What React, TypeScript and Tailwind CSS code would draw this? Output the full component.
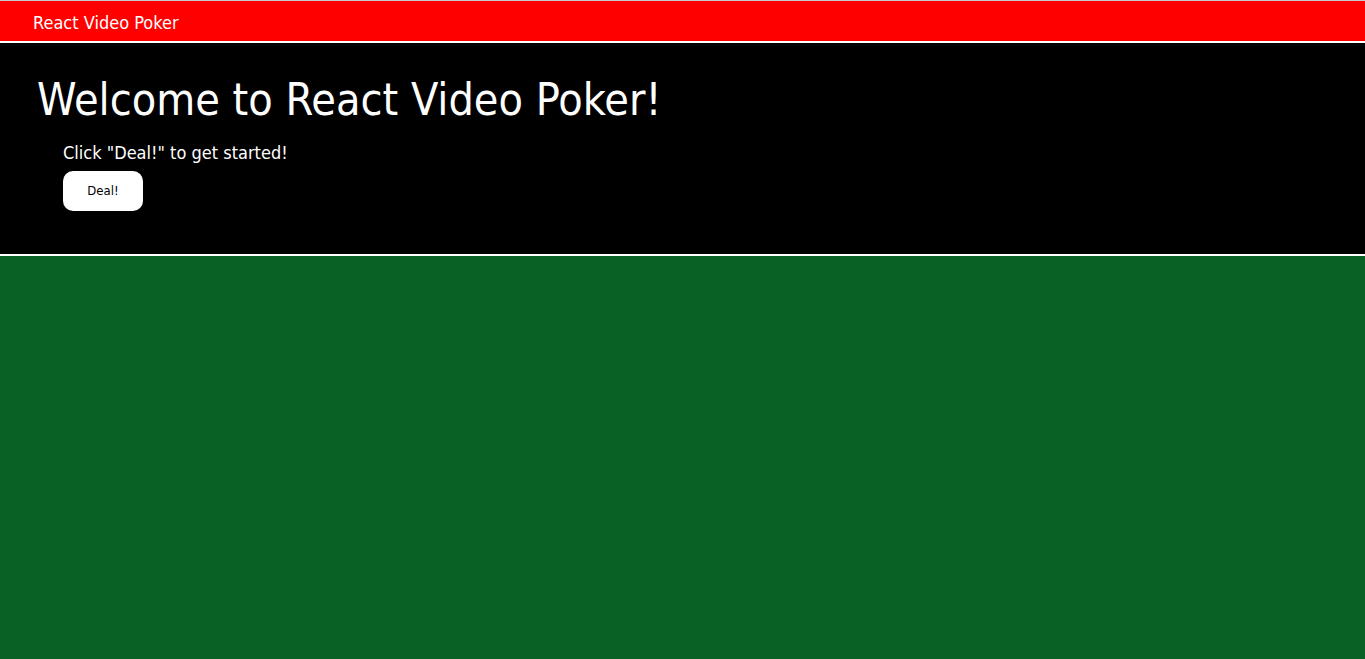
export default function App() {
  return (
    <div
      className="min-h-[659px] bg-[#0a6125] text-white"
      style={{ fontFamily: '"DejaVu Sans Condensed", "DejaVu Sans", sans-serif' }}
    >
      <div className="border-t border-[#c8c8c8]" />
      <header className="h-[40px] bg-[#ff0000] border-b-2 border-white flex items-center px-[33px] box-content">
        <span className="text-[18px] mt-[2px]">React Video Poker</span>
      </header>
      <section className="bg-black border-b-2 border-white h-[213px] pl-[37px] pt-[35px]">
        <h1 className="text-[44.5px] leading-none">Welcome to React Video Poker!</h1>
        <div className="pl-[26px] mt-[19px]">
          <p className="text-[18px] leading-tight">Click "Deal!" to get started!</p>
          <button className="mt-[7px] w-[80px] h-[40px] rounded-[10px] bg-white text-black text-[13px]">
            Deal!
          </button>
        </div>
      </section>
    </div>
  );
}
